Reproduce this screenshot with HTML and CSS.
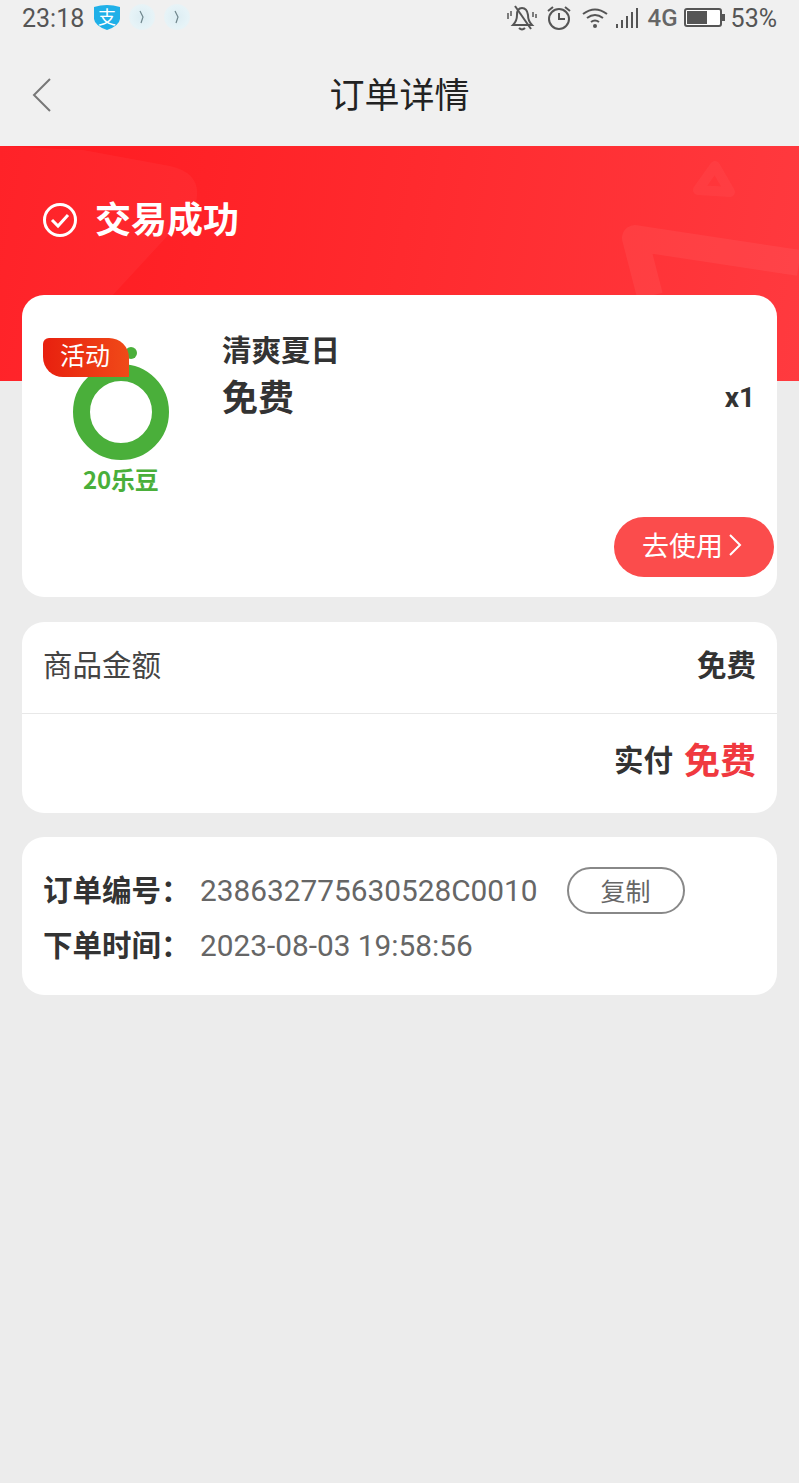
FILE: index.html
```html
<!DOCTYPE html>
<html lang="zh-CN">
<head>
<meta charset="utf-8">
<title>订单详情</title>
<link rel="stylesheet" href="styles.css">
</head>
<body>
<div class="top">
  <div class="status">
    <div class="status-left">
      <span class="time">23:18</span>
      <span class="shield">
        <svg width="26" height="26" viewBox="0 0 26 26"><path d="M0 3 Q13 -1 26 3 V15 Q25 22 13 26 Q1 22 0 15Z" fill="#1fb0e8"/></svg>
        <span class="shield-text">支</span>
      </span>
      <span class="bubble"><svg width="8" height="14" viewBox="0 0 8 14"><path d="M2 1 L5 7 L3 13" fill="none" stroke="#6f858c" stroke-width="1.2"/></svg></span>
      <span class="bubble"><svg width="8" height="14" viewBox="0 0 8 14"><path d="M2 1 L5 7 L3 13" fill="none" stroke="#6f858c" stroke-width="1.2"/></svg></span>
    </div>
    <div class="status-right">
      <svg class="i-bell" width="30" height="28" viewBox="0 0 30 28" fill="none" stroke="#555" stroke-width="2"><path d="M6 21 Q10 17 10 11 Q10 4 15 4 Q20 4 21 11 Q21 17 25 21Z"/><path d="M12 24 Q15 27 18 24"/><path d="M8 2 L24 25"/><path d="M1 9 V15M4 7 V12M26 8 V13M29 10 V14" stroke-width="1.5"/></svg>
      <svg class="i-alarm" width="26" height="26" viewBox="0 0 26 26" fill="none" stroke="#555" stroke-width="2"><circle cx="13" cy="14" r="10"/><path d="M13 8 V14 H19"/><path d="M2 6 L7 2M24 6 L19 2"/></svg>
      <svg class="i-wifi" width="26" height="22" viewBox="0 0 26 22" fill="none" stroke="#555" stroke-width="2"><path d="M1 7 Q13 -2 25 7"/><path d="M5 11 Q13 5 21 11"/><path d="M9 15 Q13 12 17 15"/><circle cx="13" cy="19" r="2" fill="#555" stroke="none"/></svg>
      <svg class="i-signal" width="24" height="22" viewBox="0 0 24 22" fill="#555"><rect x="0" y="17" width="2" height="4"/><rect x="5" y="13" width="2" height="8"/><rect x="10" y="9" width="2" height="12"/><rect x="15" y="5" width="2" height="16"/><rect x="20" y="1" width="2" height="20"/></svg>
      <span class="net">4G</span>
      <svg class="i-batt" width="42" height="20" viewBox="0 0 42 20"><rect x="1" y="1" width="36" height="17" rx="2" fill="#fff" stroke="#555" stroke-width="2"/><rect x="3" y="3" width="20" height="13" fill="#555"/><rect x="38" y="6" width="3" height="7" fill="#555"/></svg>
      <span class="pct">53%</span>
    </div>
  </div>
  <div class="nav">
    <svg class="back" width="22" height="36" viewBox="0 0 22 36" fill="none" stroke="#777" stroke-width="2"><path d="M19 2 L3 18 L19 34"/></svg>
    <h1 class="nav-title">订单详情</h1>
  </div>
</div>

<section class="hero">
  <svg class="hero-art" width="799" height="235" viewBox="0 0 799 235" fill="none">
    <path d="M0 0 L83 4 L170 20 Q205 28 195 60 L75 190 L30 235 L0 235Z" fill="#fff" fill-opacity="0.04"/>
    <path d="M715 20 L730 46 L698 44Z" stroke="#fff" stroke-opacity="0.04" stroke-width="10" stroke-linejoin="round"/>
    <path d="M799 117 L635 92 L650 150" stroke="#fff" stroke-opacity="0.055" stroke-width="26" stroke-linejoin="round"/>
  </svg>
  <div class="hero-row">
    <svg width="36" height="36" viewBox="0 0 36 36" fill="none" stroke="#fff"><circle cx="18" cy="18" r="15.5" stroke-width="3"/><path d="M10 18 L16 24 L26 13" stroke-width="3"/></svg>
    <span class="hero-title">交易成功</span>
  </div>
</section>

<main class="content">
  <article class="card product">
    <div class="thumb">
      <svg class="ring" width="98" height="122" viewBox="0 0 98 122"><circle cx="59" cy="13" r="6" fill="#4aaf3a"/><circle cx="49" cy="72" r="39.5" fill="none" stroke="#4aaf3a" stroke-width="17"/></svg>
      <span class="beans">20乐豆</span>
      <span class="tag">活动</span>
    </div>
    <div class="product-info">
      <div class="product-name">清爽夏日</div>
      <div class="product-price">免费</div>
    </div>
    <div class="qty">x1</div>
    <button class="use-btn">去使用<svg width="14" height="24" viewBox="0 0 14 24" fill="none" stroke="#fff" stroke-width="2"><path d="M2 2 L12 12 L2 22"/></svg></button>
  </article>

  <article class="card amounts">
    <div class="amount-row">
      <span class="amount-label">商品金额</span>
      <span class="amount-value">免费</span>
    </div>
    <div class="paid-row">
      <span class="paid-label">实付</span>
      <span class="paid-value">免费</span>
    </div>
  </article>

  <article class="card order">
    <div class="order-row">
      <span class="order-label">订单编号：</span>
      <span class="order-value">238632775630528C0010</span>
      <button class="copy-btn">复制</button>
    </div>
    <div class="order-row">
      <span class="order-label">下单时间：</span>
      <span class="order-value">2023-08-03 19:58:56</span>
    </div>
  </article>
</main>
</body>
</html>
```
FILE: styles.css
```css
* { box-sizing: border-box; }
html, body { margin: 0; padding: 0; }
body {
  width: 799px;
  height: 1483px;
  overflow: hidden;
  background: #ececec;
  font-family: "Noto Sans CJK SC", Roboto, sans-serif;
  color: #333;
}
.top { height: 146px; background: #f0f0f0; }
.status {
  height: 36px;
  padding: 0 22px;
  display: flex;
  justify-content: space-between;
  align-items: center;
  font-family: Roboto, sans-serif;
  font-size: 25px;
  color: #555;
}
.status-left, .status-right { display: flex; align-items: center; }
.time { width: 72px; }
.shield { position: relative; width: 26px; height: 26px; margin-right: 9px; margin-top: -2px; }
.shield svg { display: block; }
.shield-text {
  position: absolute;
  inset: 0;
  text-align: center;
  font: 18px/24px "Noto Sans CJK SC", sans-serif;
  color: #fff;
}
.bubble {
  width: 26px;
  height: 26px;
  margin-right: 9px;
  margin-top: -2px;
  border-radius: 50%;
  background: radial-gradient(circle, #dcedf3 0%, #e6f3f7 60%, #f0f0f0 100%);
  display: flex;
  align-items: center;
  justify-content: center;
}
.status-right svg { display: block; flex: none; }
.i-bell { margin-right: 9px; }
.i-alarm { margin-right: 10px; }
.i-wifi { margin-right: 8px; }
.i-signal { margin-right: 8px; }
.net { margin-right: 6px; font-size: 24px; font-weight: 500; color: #666; }
.i-batt { margin-right: 5px; }
.nav {
  position: relative;
  height: 110px;
  display: flex;
  align-items: center;
  justify-content: center;
}
.back { position: absolute; left: 31px; top: 41px; }
.nav-title {
  margin: 0;
  font-size: 35px;
  font-weight: 400;
  color: #222;
  position: relative;
  top: 1px;
}
.hero {
  position: relative;
  height: 235px;
  background: linear-gradient(100deg, #ff1a20 0%, #ff2a2e 50%, #ff3a3f 100%);
  overflow: hidden;
}
.hero-art { position: absolute; left: 0; top: 0; }
.hero-row {
  position: relative;
  display: flex;
  align-items: center;
  gap: 17px;
  padding: 51px 0 0 42px;
}
.hero-row svg { flex: none; }
.hero-title { font-size: 36px; font-weight: 700; color: #fff; line-height: 40px; margin-bottom: 6px; }
.content {
  position: relative;
  margin-top: -86px;
  padding: 0 22px;
  display: flex;
  flex-direction: column;
  gap: 24px;
}
.card { background: #fff; border-radius: 22px; }
.product { position: relative; height: 302px; margin-bottom: 1px; }
.thumb { position: absolute; left: 21px; top: 43px; width: 160px; height: 160px; }
.ring { position: absolute; left: 29px; top: 2px; display: block; }
.beans {
  position: absolute;
  left: 40px;
  top: 125px;
  font: 700 24px/32px "Noto Sans CJK SC", sans-serif;
  letter-spacing: -0.2px;
  color: #4aaf3a;
  white-space: nowrap;
}
.tag {
  position: absolute;
  left: 0;
  top: 0;
  width: 86px;
  height: 39px;
  padding-right: 2px;
  border-radius: 6px 20px 0 20px;
  background: linear-gradient(90deg, #e8200f, #f04a18);
  color: #fff;
  font-size: 25px;
  line-height: 33px;
  text-align: center;
}
.product-info { position: absolute; left: 200px; top: 31px; }
.product-name { font-size: 29.5px; font-weight: 700; line-height: 44px; color: #333; }
.product-price { font-size: 36px; font-weight: 700; line-height: 50px; color: #333; }
.qty {
  position: absolute;
  right: 22px;
  top: 84px;
  font: 700 28px/38px Roboto, sans-serif;
  color: #333;
}
.use-btn {
  position: absolute;
  right: 3px;
  top: 222px;
  width: 160px;
  height: 60px;
  padding: 0 4px 4px 0;
  border: 0;
  border-radius: 30px;
  background: #fb4c4c;
  color: #fff;
  font: 400 27px/56px "Noto Sans CJK SC", sans-serif;
  display: flex;
  align-items: center;
  justify-content: center;
  gap: 5px;
}
.use-btn svg { flex: none; }
.amount-row {
  height: 92px;
  padding: 0 21px 9px;
  display: flex;
  align-items: center;
  justify-content: space-between;
  border-bottom: 1px solid #e8e8e8;
}
.amount-label { font-size: 29.5px; color: #444; }
.amount-value { font-size: 29.5px; font-weight: 700; color: #333; }
.paid-row {
  height: 99px;
  padding: 0 21px 12px;
  display: flex;
  align-items: center;
  justify-content: flex-end;
  gap: 11px;
}
.paid-label { font-size: 29.5px; font-weight: 700; color: #333; }
.paid-value { font-size: 36px; font-weight: 700; color: #f0393f; }
.order { height: 158px; padding: 26px 21px 0; }
.order-row { display: flex; align-items: center; height: 55px; }
.order-label { font-size: 29.5px; font-weight: 700; color: #333; width: 157px; padding-bottom: 5px; }
.order-value { font-family: Roboto, sans-serif; font-size: 29.8px; color: #666; }
.copy-btn {
  width: 118px;
  height: 47px;
  margin-left: 29px;
  padding: 0;
  background: #fff;
  border: 2px solid #888;
  border-radius: 24px;
  color: #666;
  font: 400 25px/39px "Noto Sans CJK SC", sans-serif;
}
```
